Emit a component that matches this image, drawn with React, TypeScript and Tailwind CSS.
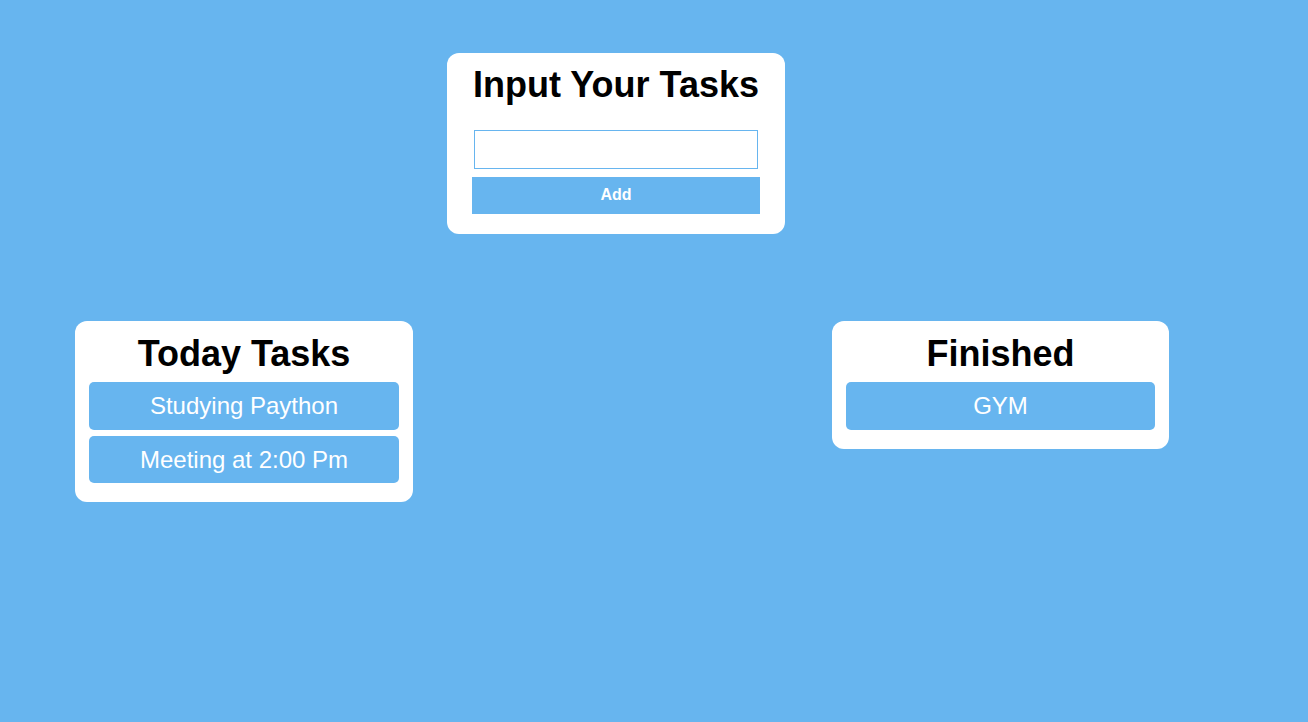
export default function App() {
  return (
    <div className="min-h-[722px] bg-[#67b5ef] pt-[53px] font-['Liberation_Sans',Arial,sans-serif]">
      <div className="ml-[447px] w-[338px] rounded-xl bg-white px-[25px] pt-[12px] pb-[20px]">
        <h1 className="text-center text-[36px] font-bold leading-[40px] text-black">Input Your Tasks</h1>
        <input
          type="text"
          className="mx-auto mt-[25px] block h-[39px] w-[284px] border border-[#67b5ef] bg-white outline-none"
        />
        <button className="mt-[8px] block h-[37px] w-full bg-[#67b5ef] pb-[1px] text-[16px] leading-[18px] font-bold text-white">
          Add
        </button>
      </div>

      <div className="mt-[87px] flex items-start pl-[75px]">
        <TaskCard title="Today Tasks" items={today} width="w-[338px]" />
        <div className="ml-[419px]">
          <TaskCard title="Finished" items={finished} width="w-[337px]" />
        </div>
      </div>
    </div>
  );
}

function TaskCard({ title, items, width }: { title: string; items: string[]; width: string }) {
  return (
    <div className={`${width} rounded-xl bg-white px-[14px] pt-[13px] pb-[19px]`}>
      <h2 className="text-center text-[36px] font-bold leading-[40px] text-black">{title}</h2>
      <div className="mt-[8px] flex flex-col gap-[6px]">
        {items.map((item) => (
          <div
            key={item}
            className="flex h-[47.5px] items-center justify-center rounded-[5px] bg-[#67b5ef] pt-[1px] text-[24px] text-white"
          >
            {item}
          </div>
        ))}
      </div>
    </div>
  );
}

const today = ['Studying Paython', 'Meeting at 2:00 Pm'];
const finished = ['GYM'];
